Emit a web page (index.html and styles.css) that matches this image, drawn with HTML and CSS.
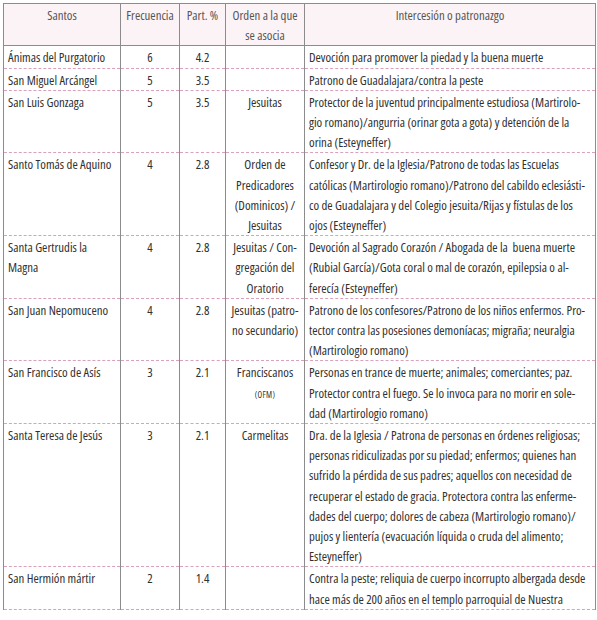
FILE: index.html
```html
<!DOCTYPE html>
<html lang="es">
<head>
<meta charset="utf-8">
<title>Santos</title>
<link rel="stylesheet" href="styles.css">
</head>
<body>
<table class="tabla">
  <colgroup>
    <col class="c-santo">
    <col class="c-frec">
    <col class="c-part">
    <col class="c-orden">
    <col class="c-inter">
  </colgroup>
  <thead>
    <tr>
      <th>Santos</th>
      <th>Frecuencia</th>
      <th>Part. %</th>
      <th>Orden a la que<br>se asocia</th>
      <th>Intercesión o patronazgo</th>
    </tr>
  </thead>
  <tbody>
    <tr>
      <td>Ánimas del Purgatorio</td>
      <td class="num">6</td>
      <td class="num">4.2</td>
      <td class="orden"></td>
      <td>Devoción para promover la piedad y la buena muerte</td>
    </tr>
    <tr>
      <td>San Miguel Arcángel</td>
      <td class="num">5</td>
      <td class="num">3.5</td>
      <td class="orden"></td>
      <td>Patrono de Guadalajara/contra la peste</td>
    </tr>
    <tr>
      <td>San Luis Gonzaga</td>
      <td class="num">5</td>
      <td class="num">3.5</td>
      <td class="orden">Jesuitas</td>
      <td>Protector de la juventud principalmente estudiosa (Martirolo-<br>gio romano)/angurria (orinar gota a gota) y detención de la<br>orina (Esteyneffer)</td>
    </tr>
    <tr>
      <td>Santo Tomás de Aquino</td>
      <td class="num">4</td>
      <td class="num">2.8</td>
      <td class="orden">Orden de<br>Predicadores<br>(Dominicos) /<br>Jesuitas</td>
      <td>Confesor y Dr. de la Iglesia/Patrono de todas las Escuelas<br>católicas (Martirologio romano)/Patrono del cabildo eclesiásti-<br>co de Guadalajara y del Colegio jesuita/Rijas y fístulas de los<br>ojos (Esteyneffer)</td>
    </tr>
    <tr>
      <td>Santa Gertrudis la<br>Magna</td>
      <td class="num">4</td>
      <td class="num">2.8</td>
      <td class="orden">Jesuitas / Con-<br>gregación del<br>Oratorio</td>
      <td>Devoción al Sagrado Corazón / Abogada de la&nbsp; buena muerte<br>(Rubial García)/Gota coral o mal de corazón, epilepsia o al-<br>ferecía (Esteyneffer)</td>
    </tr>
    <tr>
      <td>San Juan Nepomuceno</td>
      <td class="num">4</td>
      <td class="num">2.8</td>
      <td class="orden">Jesuitas (patro-<br>no secundario)</td>
      <td>Patrono de los confesores/Patrono de los niños enfermos. Pro-<br>tector contra las posesiones demoníacas; migraña; neuralgia<br>(Martirologio romano)</td>
    </tr>
    <tr>
      <td>San Francisco de Asís</td>
      <td class="num">3</td>
      <td class="num">2.1</td>
      <td class="orden">Franciscanos<br><span class="sc">(OFM)</span></td>
      <td>Personas en trance de muerte; animales; comerciantes; paz.<br>Protector contra el fuego. Se lo invoca para no morir en sole-<br>dad (Martirologio romano)</td>
    </tr>
    <tr>
      <td>Santa Teresa de Jesús</td>
      <td class="num">3</td>
      <td class="num">2.1</td>
      <td class="orden">Carmelitas</td>
      <td>Dra. de la Iglesia / Patrona de personas en órdenes religiosas;<br>personas ridiculizadas por su piedad; enfermos; quienes han<br>sufrido la pérdida de sus padres; aquellos con necesidad de<br>recuperar el estado de gracia. Protectora contra las enferme-<br>dades del cuerpo; dolores de cabeza (Martirologio romano)/<br>pujos y lientería (evacuación líquida o cruda del alimento;<br>Esteyneffer)</td>
    </tr>
    <tr>
      <td>San Hermión mártir</td>
      <td class="num">2</td>
      <td class="num">1.4</td>
      <td class="orden"></td>
      <td>Contra la peste; reliquia de cuerpo incorrupto albergada desde<br>hace más de 200 años en el templo parroquial de Nuestra</td>
    </tr>
  </tbody>
</table>
</body>
</html>
```

FILE: styles.css
```css
html, body {
  margin: 0;
  padding: 0;
  background: #ffffff;
}

.tabla {
  margin: 3px 0 0 3px;
  width: 593px;
  table-layout: fixed;
  border-collapse: collapse;
  font-family: "Open Sans", "Liberation Sans", sans-serif;
  font-stretch: 75%;
  font-weight: 370;
  font-size: 12.8px;
  color: #303030;
}

.c-santo { width: 117px; }
.c-frec { width: 59px; }
.c-part { width: 46px; }
.c-orden { width: 79px; }
.c-inter { width: 291px; }

.tabla th {
  font-weight: 370;
  color: #555555;
  background: #fcf3f6;
  text-align: center;
  vertical-align: top;
  line-height: 20.2px;
  padding: 1px 2px 0;
  border: 1px solid #8c8c8c;
  white-space: nowrap;
}

.tabla td {
  vertical-align: top;
  line-height: 20.2px;
  padding: 1px 4px 0;
  border-left: 1px solid #8c8c8c;
  border-right: 1px solid #8c8c8c;
  border-bottom: 1px dashed #d9a2bc;
  white-space: nowrap;
  overflow: hidden;
}

.tabla td.num,
.tabla td.orden {
  text-align: center;
  padding: 1px 1px 0;
}

.sc {
  font-size: 8.5px;
  letter-spacing: 0.3px;
}
```
